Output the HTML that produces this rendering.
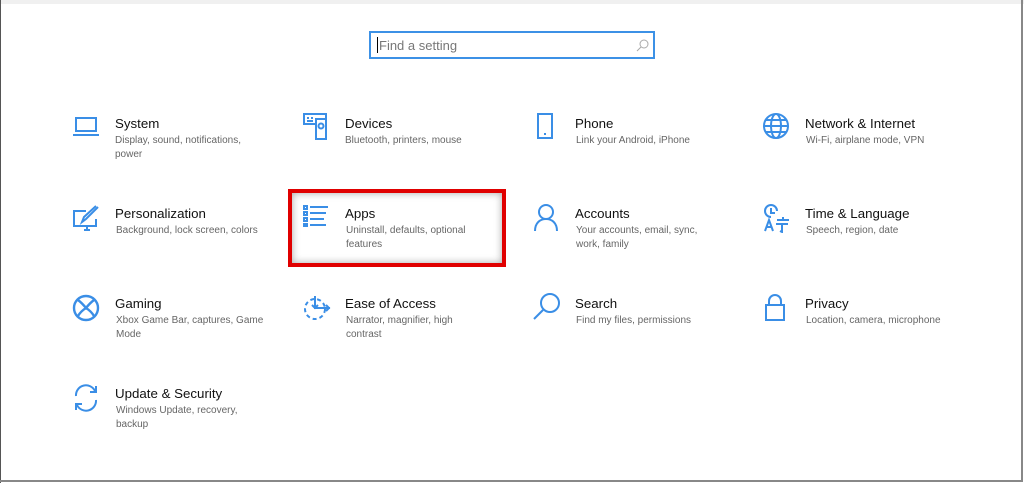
<!DOCTYPE html>
<html><head><meta charset="utf-8"><style>
*{margin:0;padding:0;box-sizing:border-box}
body{width:1024px;height:483px;background:#fff;position:relative;overflow:hidden;font-family:"Liberation Sans",sans-serif}
.top{position:absolute;left:0;top:0;width:1024px;height:4px;background:#f0f0f0}
.lb{position:absolute;left:0;top:0;width:1px;height:483px;background:#555}
.rb{position:absolute;left:1021px;top:0;width:2px;height:482px;background:#888}
.bb{position:absolute;left:0;top:480px;width:1023px;height:2px;background:#888}
.search{position:absolute;left:369px;top:31px;width:286px;height:28px;border:2px solid #3c91e6}
.search span{position:absolute;left:8px;top:5px;font-size:13px;color:#777}
.search i{position:absolute;left:6px;top:4px;width:1px;height:16px;background:#000}
.t{position:absolute;font-size:13.3px;color:#111;white-space:nowrap}
.s{position:absolute;font-size:10px;color:#666;line-height:14px;width:155px}
.hl{position:absolute;left:288px;top:189px;width:218px;height:78px;border:4px solid #e00000;box-shadow:0 0 8px rgba(0,0,0,.35) inset}
</style></head><body>
<div class="top"></div><div class="lb"></div><div class="rb"></div><div class="bb"></div>
<div class="search"><i></i><span>Find a setting</span>
<svg style="position:absolute;left:265px;top:6px" width="13" height="13" viewBox="0 0 13 13" fill="none" stroke="#aaa" stroke-width="1"><circle cx="8" cy="5" r="4"/><path d="M5 8 L1 12"/></svg></div>
<div class="hl"></div>

<svg style="position:absolute;left:72px;top:114px" width="28" height="24" viewBox="0 0 28 24" fill="none" stroke="#3a8ee6" stroke-width="2"><rect x="4" y="4" width="20" height="13"/><path d="M1 21 H27"/></svg>
<svg style="position:absolute;left:302px;top:112px" width="26" height="28" viewBox="0 0 26 28" fill="none" stroke="#3a8ee6" stroke-width="2"><path d="M13 12 H2 V2 H24 V6"/><rect x="14" y="7" width="10" height="20"/><circle cx="19" cy="14" r="2.5"/><path d="M5 6h2M9 6h2M5 9h6"/></svg>
<svg style="position:absolute;left:536px;top:112px" width="20" height="28" viewBox="0 0 20 28" fill="none" stroke="#3a8ee6" stroke-width="2"><rect x="2" y="2" width="14" height="24"/><path d="M8 22h2"/></svg>
<svg style="position:absolute;left:762px;top:112px" width="28" height="28" viewBox="0 0 28 28" fill="none" stroke="#3a8ee6" stroke-width="2"><circle cx="14" cy="14" r="12"/><ellipse cx="14" cy="14" rx="5" ry="12"/><path d="M2 14H26M4 8H24M4 20H24"/></svg>

<svg style="position:absolute;left:72px;top:205px" width="28" height="28" viewBox="0 0 28 28" fill="none" stroke="#3a8ee6" stroke-width="2"><path d="M14 6H2V21H24V14"/><path d="M12 25h6M15 21v4"/><path d="M26 2 L14 14 L10 17 L12 12 L24 1"/></svg>
<svg style="position:absolute;left:302px;top:204px" width="26" height="24" viewBox="0 0 26 24" fill="none" stroke="#3a8ee6" stroke-width="2"><rect x="2" y="2" width="3" height="3"/><rect x="2" y="8" width="3" height="3"/><rect x="2" y="14" width="3" height="3"/><rect x="2" y="20" width="3" height="2"/><path d="M8 3H26M8 9H24M8 15H22M8 21H24"/></svg>
<svg style="position:absolute;left:533px;top:203px" width="26" height="28" viewBox="0 0 26 28" fill="none" stroke="#3a8ee6" stroke-width="2"><circle cx="13" cy="9" r="7"/><path d="M2 28 C2 20 7 16 13 16 C19 16 24 20 24 28"/></svg>
<svg style="position:absolute;left:762px;top:203px" width="30" height="30" viewBox="0 0 30 30" fill="none" stroke="#3a8ee6" stroke-width="2"><path d="M9 14 A6 6 0 1 1 15 8"/><path d="M9 5v5h4"/><path d="M3 28 L7 17 L11 28M4.5 24h5"/><path d="M15 17h12M21 14v3M14 21h12M20 21v8l-2 -1"/></svg>

<svg style="position:absolute;left:72px;top:294px" width="28" height="28" viewBox="0 0 28 28" fill="none" stroke="#3a8ee6" stroke-width="2.4"><circle cx="14" cy="14" r="12"/><path d="M6 6 C10 9 14 14 14 14 C14 14 18 9 22 6M6 22 C9 17 14 14 14 14 C14 14 19 17 22 22"/></svg>
<svg style="position:absolute;left:302px;top:294px" width="30" height="28" viewBox="0 0 30 28" fill="none" stroke="#3a8ee6" stroke-width="2" stroke-dasharray="4 3"><circle cx="13" cy="15" r="10"/></svg>
<svg style="position:absolute;left:302px;top:294px" width="30" height="28" viewBox="0 0 30 28" fill="none" stroke="#3a8ee6" stroke-width="2"><path d="M13 2V14H28M24 11l3 3-3 3M10 11l3 3 3-3"/></svg>
<svg style="position:absolute;left:532px;top:292px" width="30" height="30" viewBox="0 0 30 30" fill="none" stroke="#3a8ee6" stroke-width="2"><circle cx="18" cy="11" r="9"/><path d="M11 18 L2 27"/></svg>
<svg style="position:absolute;left:764px;top:292px" width="24" height="30" viewBox="0 0 24 30" fill="none" stroke="#3a8ee6" stroke-width="2"><rect x="2" y="13" width="18" height="15"/><path d="M5 13V9 A6 6 0 0 1 17 9V13"/></svg>

<svg style="position:absolute;left:72px;top:384px" width="28" height="28" viewBox="0 0 28 28" fill="none" stroke="#3a8ee6" stroke-width="2"><path d="M4 12 A10 10 0 0 1 23 7"/><path d="M24 2v6h-6"/><path d="M24 16 A10 10 0 0 1 5 21"/><path d="M4 26v-6h6"/></svg>

<div class="t" style="left:115px;top:116px">System</div><div class="s" style="left:115px;top:134px">Display, sound, notifications, power</div>
<div class="t" style="left:345px;top:116px">Devices</div><div class="s" style="left:345px;top:134px">Bluetooth, printers, mouse</div>
<div class="t" style="left:575px;top:116px">Phone</div><div class="s" style="left:576px;top:134px">Link your Android, iPhone</div>
<div class="t" style="left:805px;top:116px">Network &amp; Internet</div><div class="s" style="left:806px;top:134px">Wi-Fi, airplane mode, VPN</div>

<div class="t" style="left:115px;top:206px">Personalization</div><div class="s" style="left:116px;top:224px">Background, lock screen, colors</div>
<div class="t" style="left:345px;top:206px">Apps</div><div class="s" style="left:346px;top:224px;width:140px">Uninstall, defaults, optional features</div>
<div class="t" style="left:575px;top:206px">Accounts</div><div class="s" style="left:576px;top:224px;width:130px">Your accounts, email, sync, work, family</div>
<div class="t" style="left:805px;top:206px">Time &amp; Language</div><div class="s" style="left:806px;top:224px">Speech, region, date</div>

<div class="t" style="left:115px;top:296px">Gaming</div><div class="s" style="left:116px;top:314px;width:160px">Xbox Game Bar, captures, Game Mode</div>
<div class="t" style="left:345px;top:296px">Ease of Access</div><div class="s" style="left:346px;top:314px;width:125px">Narrator, magnifier, high contrast</div>
<div class="t" style="left:575px;top:296px">Search</div><div class="s" style="left:576px;top:314px">Find my files, permissions</div>
<div class="t" style="left:805px;top:296px">Privacy</div><div class="s" style="left:806px;top:314px">Location, camera, microphone</div>

<div class="t" style="left:115px;top:386px">Update &amp; Security</div><div class="s" style="left:116px;top:404px;width:140px">Windows Update, recovery, backup</div>
</body></html>
